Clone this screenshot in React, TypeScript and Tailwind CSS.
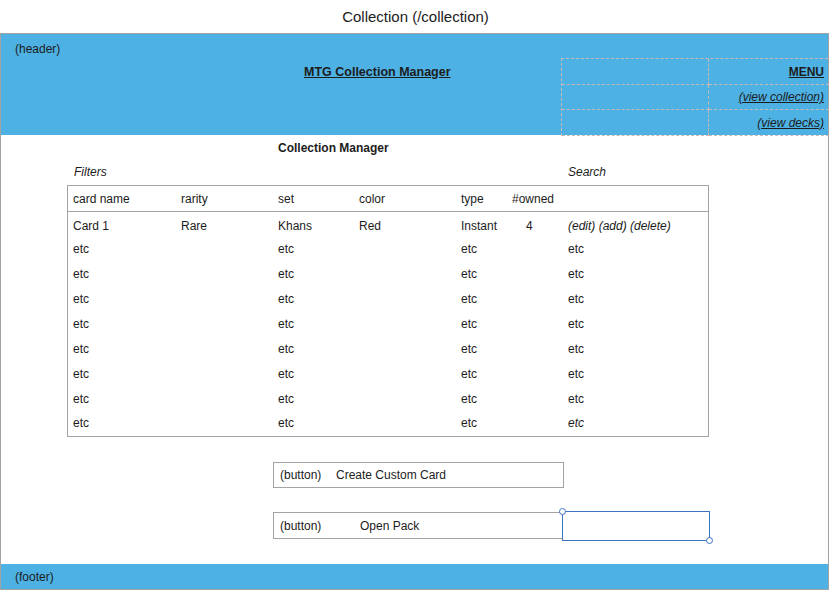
import React from "react";

const rows = [
  { name: "Card 1", rarity: "Rare", set: "Khans", color: "Red", type: "Instant", owned: "4", actions: "(edit) (add) (delete)" },
  ...Array.from({ length: 8 }, () => ({ name: "etc", rarity: "", set: "etc", color: "", type: "etc", owned: "", actions: "etc" })),
];

function Cells({ r, first, italicLast }: { r: typeof rows[number]; first: boolean; italicLast: boolean }) {
  return (
    <div className={"flex h-[25px] items-center" + (first ? " pt-[3px]" : "")}>
      <span className="w-[113px] pl-[5px]">{r.name}</span>
      <span className="w-[97px]">{r.rarity}</span>
      <span className="w-[81px]">{r.set}</span>
      <span className="w-[102px]">{r.color}</span>
      <span className="w-[51px]">{r.type}</span>
      <span className="w-[56px] pl-[14px]">{r.owned}</span>
      <span className={italicLast ? "italic" : ""}>{r.actions}</span>
    </div>
  );
}

export default function App() {
  return (
    <div className="w-[831px] h-[590px] bg-white text-[12px] text-[#1c1c1c] font-['Liberation_Sans',Arial,sans-serif]">
      {/* page title */}
      <div className="h-[33px] flex items-center justify-center text-[15px] pt-[1px]">Collection (/collection)</div>

      {/* wireframe */}
      <div className="w-[829px] h-[557px] border border-[#a3a3a3] flex flex-col">
        {/* header */}
        <div className="h-[101px] bg-[#4eb1e4] flex">
          <div className="flex-1 flex flex-col">
            <div className="pl-[14px] pt-[6px] h-[24px]">(header)</div>
            <div className="h-[28px] flex items-center pl-[303px]">
              <span className="font-bold underline text-[12.5px]">MTG Collection Manager</span>
            </div>
          </div>
          <div className="w-[267px] pt-[24px]">
            <div className="grid grid-cols-[147px_120px] grid-rows-[26px_25px_26px] border-t border-l border-dashed border-[#c9b9b6] h-[78px]">
              <div className="border-r border-b border-dashed border-[#c9b9b6]" />
              <div className="border-b border-dashed border-[#c9b9b6] flex items-center justify-end pr-[5px] pt-[1px]">
                <span className="font-bold underline">MENU</span>
              </div>
              <div className="border-r border-b border-dashed border-[#c9b9b6]" />
              <div className="border-b border-dashed border-[#c9b9b6] flex items-center justify-end pr-[5px]">
                <span className="italic underline">(view collection)</span>
              </div>
              <div className="border-r border-b border-dashed border-[#c9b9b6]" />
              <div className="border-b border-dashed border-[#c9b9b6] flex items-center justify-end pr-[5px]">
                <span className="italic underline">(view decks)</span>
              </div>
            </div>
          </div>
        </div>

        {/* main */}
        <div className="flex-1 flex flex-col pl-[66px]">
          <div className="h-[22px] flex items-end pl-[211px] font-bold">Collection Manager</div>
          <div className="h-[26px] flex items-end pb-[2px] italic">
            <span className="w-[501px] pl-[7px]">Filters</span>
            <span>Search</span>
          </div>
          <div className="mt-[2px] w-[642px] h-[252px] border border-[#a3a3a3] flex flex-col">
            <div className="h-[26px] border-b border-[#a3a3a3] flex items-center pt-[1px]">
              <span className="w-[113px] pl-[5px]">card name</span>
              <span className="w-[97px]">rarity</span>
              <span className="w-[81px]">set</span>
              <span className="w-[102px]">color</span>
              <span className="w-[51px]">type</span>
              <span>#owned</span>
            </div>
            {rows.map((r, i) => (
              <Cells key={i} r={r} first={i === 0} italicLast={i === 0 || i === rows.length - 1} />
            ))}
          </div>

          {/* buttons */}
          <div className="mt-[25px] ml-[206px] w-[291px] h-[26px] border border-[#a3a3a3] flex items-center pl-[6px]">
            <span className="w-[56px]">(button)</span>
            <span>Create Custom Card</span>
          </div>
          <div className="mt-[24px] ml-[206px] flex">
            <div className="w-[290px] h-[27px] border border-[#a3a3a3] flex items-center pl-[6px]">
              <span className="w-[80px]">(button)</span>
              <span>Open Pack</span>
            </div>
            <div className="relative -mt-[1px] -ml-[1px] w-[148px] h-[30px] border border-[#3c74c4]">
              <span className="absolute -left-[4px] -top-[4px] w-[7px] h-[7px] rounded-full border border-[#3c74c4] bg-white" />
              <span className="absolute -right-[4px] -bottom-[4px] w-[7px] h-[7px] rounded-full border border-[#3c74c4] bg-white" />
            </div>
          </div>
        </div>

        {/* footer */}
        <div className="h-[25px] bg-[#4eb1e4] flex items-center pl-[14px]">(footer)</div>
      </div>
    </div>
  );
}
